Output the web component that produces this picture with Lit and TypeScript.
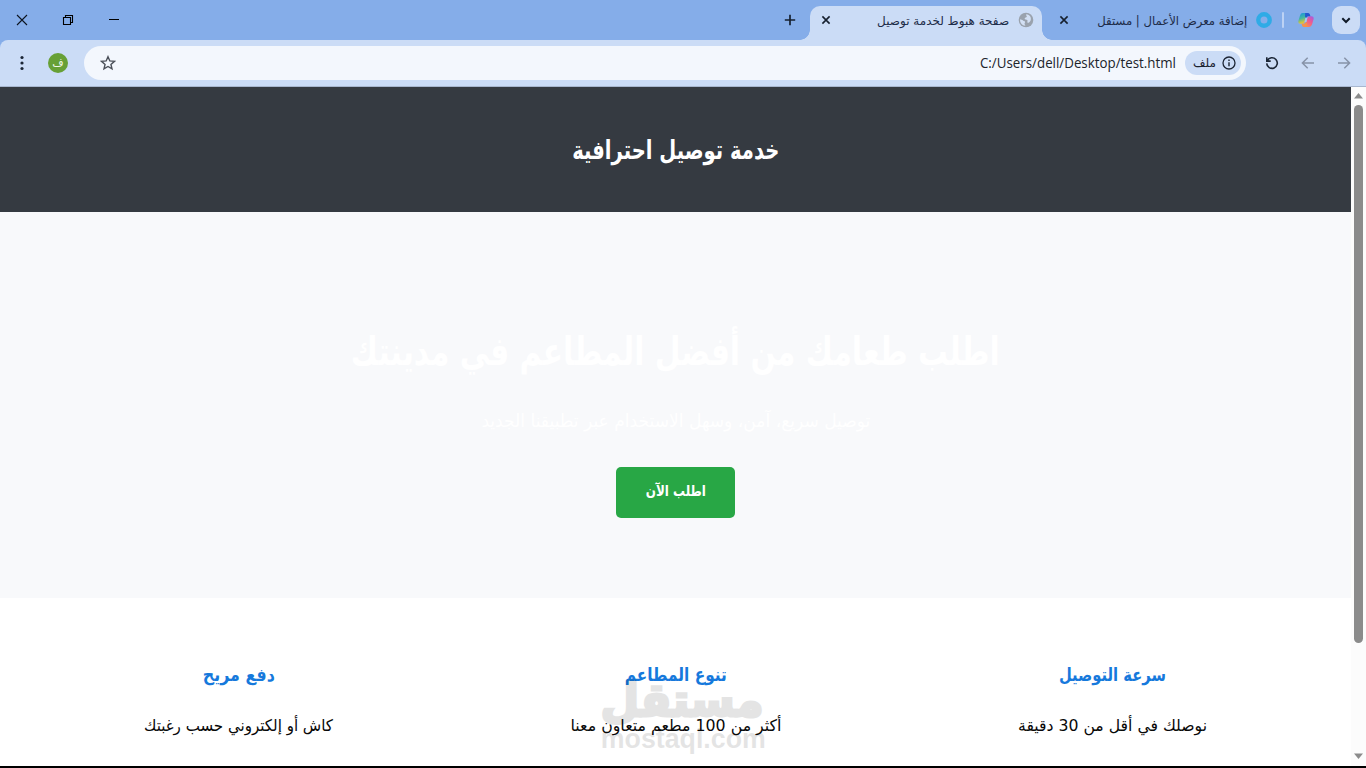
import { LitElement, html, css } from "lit";
import { customElement, property } from "lit/decorators.js";

/** A single line of text condensed or stretched to an exact width. */
@customElement("fit-text")
class FitText extends LitElement {
  @property({ type: Number }) width = 100;
  @property() text = "";
  @property() direction = "rtl";

  static styles = css`
    :host { display: block; flex: none; }
    .box { display: flex; justify-content: center; direction: ltr; }
    .line { flex: none; white-space: pre; transform-origin: center; }
  `;

  updated() {
    const box = this.renderRoot.querySelector(".box") as HTMLElement;
    const line = this.renderRoot.querySelector(".line") as HTMLElement;
    box.style.width = `${this.width}px`;
    line.style.transform = "none";
    const natural = line.getBoundingClientRect().width;
    if (natural) line.style.transform = `scaleX(${this.width / natural})`;
  }

  render() {
    return html`<div class="box"><span class="line" dir=${this.direction}>${this.text}</span></div>`;
  }
}

const features = [
  { title: "سرعة التوصيل", tw: 107, body: "نوصلك في أقل من 30 دقيقة", bw: 189 },
  { title: "تنوع المطاعم", tw: 102, body: "أكثر من 100 مطعم متعاون معنا", bw: 211 },
  { title: "دفع مريح", tw: 72, body: "كاش أو إلكتروني حسب رغبتك", bw: 189 },
];

const closeX = html`<svg class="i16" viewBox="0 0 16 16"><path d="M4.400 4.400l7.200 7.200M11.600 4.400l-7.200 7.200" stroke="#16202f" stroke-width="1.600"/></svg>`;

@customElement("app-root")
class AppRoot extends LitElement {
  static styles = css`
    :host { display: block; }
    * { box-sizing: border-box; }
    svg { display: block; flex: none; }
    .window { position: relative; display: flex; flex-direction: column; width: 1366px; height: 768px; overflow: hidden; direction: rtl; background: #85ade9; font-family: "DejaVu Sans", sans-serif; }
    .i16 { width: 16px; height: 16px; }
    .strip { flex: none; height: 40px; display: flex; align-items: center; padding: 0 6px 0 14px; background: #85ade9; color: #1d2c48; font-size: 12px; }
    .drop { width: 28px; height: 28px; border-radius: 9px; background: #cbdcf6; display: flex; align-items: center; justify-content: center; margin-left: 18px; }
    .sep { width: 2px; height: 16px; background: #bcd2f4; margin: 0 14px 0 10px; border-radius: 1px; }
    .tabtext { margin: 0 9px 0 25px; line-height: 20px; padding-top: 2px; }
    .tab { position: relative; width: 232px; height: 34px; align-self: flex-end; display: flex; align-items: center; padding: 0 8px 6px 8px; margin: 0 14px 0 12px; border-radius: 10px 10px 0 0; background: #cbdcf6; }
    .tab::before, .tab::after { content: ""; position: absolute; bottom: 0; width: 10px; height: 10px; }
    .tab::before { left: -10px; background: radial-gradient(circle at 0 0, transparent 9.5px, #cbdcf6 10px); }
    .tab::after { right: -10px; background: radial-gradient(circle at 100% 0, transparent 9.5px, #cbdcf6 10px); }
    .tab .tabtext { margin: 0 9px 0 43px; }
    .grow { flex: 1; }
    .winbtns { display: flex; gap: 30px; }
    .bar { flex: none; height: 47px; display: flex; align-items: center; padding: 0 14px; border-radius: 8px 8px 0 0; border-bottom: 1px solid #a8b7cf; background: #cbdcf6; }
    .nav { display: flex; gap: 20px; margin-left: 18px; }
    .omni { flex: 1; height: 34px; border-radius: 17px; display: flex; align-items: center; background: #f3f7fd; padding: 0 5px 0 16px; }
    .chip { width: 56px; height: 24px; border-radius: 12px; background: #cbdcf6; display: flex; align-items: center; padding-right: 5px; gap: 6px; color: #1b2230; font-size: 12px; line-height: 20px; margin-left: 9px; }
    .url { font-family: "Open Sans", "Noto Sans", sans-serif; font-size: 14px; line-height: 20px; color: #20242b; }
    .avatar { width: 20px; height: 20px; border-radius: 50%; background: #67a036; color: #eef6e6; font-size: 11px; line-height: 19px; text-align: center; margin: 0 16px 0 18px; }
    .view { flex: none; height: 679px; display: flex; direction: ltr; background: #fff; }
    .page { width: 1351px; display: flex; flex-direction: column; direction: rtl; overflow: hidden; }
    .head { flex: none; height: 125px; background: #353a41; color: #fff; display: flex; justify-content: center; padding-top: 43px; font-size: 26px; font-weight: 700; line-height: 40px; }
    .hero { flex: none; height: 386px; background: #f8f9fb; color: #fff; display: flex; flex-direction: column; align-items: center; padding-top: 107px; }
    .h1 { font-size: 39px; font-weight: 700; line-height: 66px; }
    .sub { font-size: 18px; line-height: 34px; margin-top: 19px; }
    .cta { width: 119px; height: 51px; margin-top: 29px; border-radius: 5px; background: #28a745; display: flex; justify-content: center; font-size: 15px; font-weight: 700; line-height: 48px; }
    .features { flex: 1; display: grid; grid-template-columns: repeat(3, 1fr); padding: 60px 20px 0; background: #fff; }
    .cell { display: flex; flex-direction: column; align-items: center; }
    .ft { color: #1679dc; font-size: 18px; font-weight: 700; line-height: 34px; }
    .fb { color: #080808; font-size: 16px; line-height: 30px; margin-top: 19px; }
    .scroll { width: 15px; display: flex; flex-direction: column; align-items: center; background: #fcfcfc; }
    .scroll .up { margin: 6px 0 6px; }
    .thumb { width: 9px; height: 538px; border-radius: 5px; background: #8b8b8b; margin-bottom: auto; }
    .scroll .down { margin-bottom: 7px; }
    .foot { flex: none; height: 2px; background: #000; }
    .mark { position: absolute; left: 601px; top: 670px; width: 164px; opacity: 0.1; color: #000; direction: ltr; }
    .ar { height: 55px; font-size: 46px; font-weight: 700; line-height: 60px; -webkit-text-stroke: 3px #000; paint-order: stroke; stroke-linejoin: round; }
    .lat { font-family: "Liberation Sans", sans-serif; font-size: 27px; font-weight: 700; line-height: 28px; }
  `;

  render() {
    return html`
      <div class="window">
        <div class="strip">
          <div class="drop"><svg class="i16" viewBox="0 0 16 16"><path d="M4.300 6.300L8 10l3.700-3.700" fill="none" stroke="#101a28" stroke-width="2"/></svg></div>
          <svg class="i16" viewBox="0 0 16 16">
            <defs>
              <linearGradient id="ga" x1="0" y1="0" x2="0.3" y2="1"><stop offset="0" stop-color="#178fe3"/><stop offset=".55" stop-color="#45b9a0"/><stop offset="1" stop-color="#f1c52b"/></linearGradient>
              <linearGradient id="gb" x1="1" y1="0" x2="0.3" y2="1"><stop offset="0" stop-color="#a15be8"/><stop offset=".5" stop-color="#ec5a93"/><stop offset="1" stop-color="#fa8c52"/></linearGradient>
            </defs>
            <path d="M4.800 1h5L8.400 4.200 6.800 9.500Q6.100 11.700 4.500 11.700H2.300Q-.3 11.700.5 8.600L2 3.400Q2.700 1 4.800 1z" fill="url(#ga)"/>
            <path d="M11.200 15h-5l1.400-3.200L9.200 6.500Q9.900 4.300 11.500 4.300h2.200q2.600 0 1.800 3.100L14 12.600q-.7 2.400-2.800 2.400z" fill="url(#gb)"/>
            <path d="M7.200 1h3q1.300 0 1.700 1.500l.5 1.800H10.500Q9.200 4.300 8.700 5.600L7 5z" fill="#2458cf"/>
            <path d="M8.800 15h-3q-1.300 0-1.700-1.500l-.5-1.800h1.900q1.300 0 1.800-1.300L9 11z" fill="#f6914c"/>
            <path d="M7.300 6h2L8.500 10h-2z" fill="#a9c5f0"/>
          </svg>
          <div class="sep"></div>
          <svg class="i16" viewBox="0 0 16 16"><circle cx="8" cy="8" r="5.700" fill="none" stroke="#2fabe6" stroke-width="4.400"/></svg>
          <fit-text class="tabtext" .width=${150} text="إضافة معرض الأعمال | مستقل"></fit-text>
          ${closeX}
          <div class="tab">
            <svg class="i16" viewBox="0 0 16 16"><circle cx="8" cy="8" r="7.300" fill="#9aa2ad"/><path d="M8.200 2.200c-.3 1.500.8 1.600.6 2.600-.4 1.100-2 .5-2.200 1.800-.1 1.200 2.200.7 2.800 1.600.6 1-.6 1.600.1 2.400.8.700 2.200-.5 3-1.900C13.700 6 12.200 2.500 8.200 2.200zM2.100 7.200c1 .2 2.200.4 3 1.300.5.800 1.500.3 1.900 1.200.4 1-.6 1.200-.4 2.300.1.800.8 1 .7 1.700C4.200 13.500 1.700 10.700 2.100 7.200z" fill="#d3e0f4"/></svg>
            <fit-text class="tabtext" .width=${132} text="صفحة هبوط لخدمة توصيل"></fit-text>
            ${closeX}
          </div>
          <svg class="i16" viewBox="0 0 16 16"><path d="M8 2.800v10.400M2.800 8h10.400" stroke="#16202f" stroke-width="1.700"/></svg>
          <div class="grow"></div>
          <div class="winbtns">
            <svg class="i16" viewBox="0 0 16 16"><path d="M3 7.500h10" stroke="#000"/></svg>
            <svg class="i16" viewBox="0 0 16 16"><path d="M3.500 5.500h7v7h-7zM5.500 5.500v-2h7v7h-2" fill="none" stroke="#000" stroke-width="1.100"/></svg>
            <svg class="i16" viewBox="0 0 16 16"><path d="M3 3l10 10M13 3L3 13" stroke="#0c1420" stroke-width="1.100"/></svg>
          </div>
        </div>
        <div class="bar">
          <div class="nav">
            <svg class="i16" viewBox="0 0 16 16"><path d="M2 8h11.500M8.300 2.700L13.600 8l-5.300 5.300" fill="none" stroke="#8793a8" stroke-width="1.500"/></svg>
            <svg class="i16" viewBox="0 0 16 16"><path d="M14 8H2.500M7.700 2.700L2.400 8l5.300 5.300" fill="none" stroke="#8793a8" stroke-width="1.500"/></svg>
            <svg class="i16" viewBox="0 0 16 16"><path d="M3.300 5.600A5.300 5.300 0 1 1 2.700 8.400M2.800 2.200v3.900h3.900" fill="none" stroke="#1b2636" stroke-width="1.600"/></svg>
          </div>
          <div class="omni">
            <div class="chip">
              <svg width="14" height="14" viewBox="0 0 14 14"><circle cx="7" cy="7" r="6" fill="none" stroke="#1c2534" stroke-width="1.300"/><path d="M7 6.200v4M7 3.600v1.400" stroke="#1c2534" stroke-width="1.400"/></svg>
              <fit-text .width=${23} text="ملف"></fit-text>
            </div>
            <fit-text class="url" direction="ltr" .width=${196} text="C:/Users/dell/Desktop/test.html"></fit-text>
            <div class="grow"></div>
            <svg class="i16" viewBox="0 0 16 16"><path d="M8 1.700l1.850 4.250 4.600.4-3.500 3.050 1.050 4.500L8 11.500l-4 2.400 1.050-4.500-3.500-3.050 4.600-.4z" fill="none" stroke="#4a4f58" stroke-width="1.400"/></svg>
          </div>
          <div class="avatar">ف</div>
          <svg class="i16" viewBox="0 0 16 16"><g fill="#1b2636"><circle cx="8" cy="2.500" r="1.600"/><circle cx="8" cy="8" r="1.600"/><circle cx="8" cy="13.500" r="1.600"/></g></svg>
        </div>
        <div class="view">
          <div class="page">
            <div class="head"><fit-text .width=${207} text="خدمة توصيل احترافية"></fit-text></div>
            <div class="hero">
              <fit-text class="h1" .width=${649} text="اطلب طعامك من أفضل المطاعم في مدينتك"></fit-text>
              <fit-text class="sub" .width=${389} text="توصيل سريع، آمن، وسهل الاستخدام عبر تطبيقنا الجديد"></fit-text>
              <div class="cta"><fit-text .width=${60} text="اطلب الآن"></fit-text></div>
            </div>
            <div class="features">
              ${features.map((f) => html`
                <div class="cell">
                  <fit-text class="ft" .width=${f.tw} text=${f.title}></fit-text>
                  <fit-text class="fb" .width=${f.bw} text=${f.body}></fit-text>
                </div>`)}
            </div>
          </div>
          <div class="scroll">
            <svg class="up" width="9" height="6" viewBox="0 0 9 6"><path d="M4.500 0L9 5.500H0z" fill="#8b8b8b"/></svg>
            <div class="thumb"></div>
            <svg class="down" width="9" height="6" viewBox="0 0 9 6"><path d="M0 .5h9L4.500 6z" fill="#8b8b8b"/></svg>
          </div>
        </div>
        <div class="foot"></div>
        <div class="mark">
          <fit-text class="ar" .width=${163} text="مستقل"></fit-text>
          <fit-text class="lat" direction="ltr" .width=${165} text="mostaql.com"></fit-text>
        </div>
      </div>
    `;
  }
}
